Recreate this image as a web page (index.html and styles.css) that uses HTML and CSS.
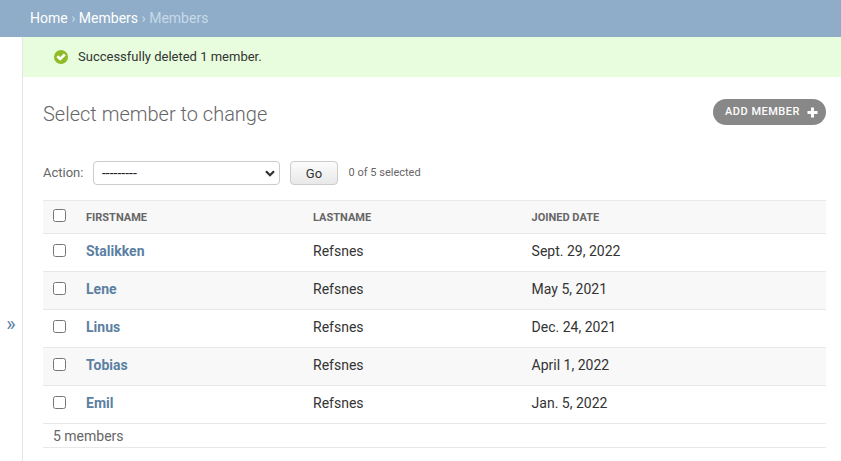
FILE: index.html
```html
<!DOCTYPE html>
<html lang="en">
<head>
<meta charset="utf-8">
<title>Select member to change</title>
<link rel="stylesheet" href="styles.css">
</head>
<body>
<nav class="breadcrumbs"><a>Home</a> › <a>Members</a> › Members</nav>
<div class="main">
<aside class="sidebar-toggle"><span>»</span></aside>
<div class="content-wrap">
<div class="message"><svg class="check" viewBox="0 0 14 14"><circle cx="7" cy="7" r="7" fill="#8fbc26"/><path d="M3.3 6.3 6.2 9 10.8 4.5" fill="none" stroke="#fff" stroke-width="2.6"/></svg>Successfully deleted 1 member.</div>
<main class="content">
<header class="title-row"><h1>Select member to change</h1><a class="add">ADD MEMBER<svg viewBox="0 0 11 11"><path d="M4 .5h3V4h3.5v3H7v3.5H4V7H.5V4H4z" fill="#fff"/></svg></a></header>
<div class="actions"><label for="action">Action:</label><div class="select"><select id="action"><option>---------</option></select><svg viewBox="0 0 10 7"><path d="M1 1.2 5 5.2 9 1.2" fill="none" stroke="#333" stroke-width="2.3"/></svg></div><button>Go</button><span class="counter">0 of 5 selected</span></div>
<table>
<thead><tr><th class="box"><input type="checkbox"></th><th class="first">FIRSTNAME</th><th class="last">LASTNAME</th><th>JOINED DATE</th></tr></thead>
<tbody>
<tr><td><input type="checkbox"></td><td><a>Stalikken</a></td><td>Refsnes</td><td>Sept. 29, 2022</td></tr>
<tr><td><input type="checkbox"></td><td><a>Lene</a></td><td>Refsnes</td><td>May 5, 2021</td></tr>
<tr><td><input type="checkbox"></td><td><a>Linus</a></td><td>Refsnes</td><td>Dec. 24, 2021</td></tr>
<tr><td><input type="checkbox"></td><td><a>Tobias</a></td><td>Refsnes</td><td>April 1, 2022</td></tr>
<tr><td><input type="checkbox"></td><td><a>Emil</a></td><td>Refsnes</td><td>Jan. 5, 2022</td></tr>
</tbody>
</table>
<p class="paginator">5 members</p>
</main>
</div>
</div>
</body>
</html>
```
FILE: styles.css
```css
* { box-sizing: border-box; }
body { margin: 0; height: 461px; overflow: hidden; display: flex; flex-direction: column; background: #fff; color: #333; font: 14px/18px Roboto, sans-serif; }
.breadcrumbs { height: 37px; flex: none; padding: 9px 30px; background: #8fadc8; color: #c8d9e8; }
.breadcrumbs a { color: #fff; }
.main { flex: 1; display: flex; min-height: 0; }
.sidebar-toggle { width: 23px; flex: none; border-right: 1px solid #e6e6e6; color: #5b80a2; font-size: 20px; padding-top: 278px; text-align: center; }
.content-wrap { flex: 1; min-width: 0; }
.message { height: 40px; display: flex; align-items: center; gap: 10px; padding-left: 31px; background: #e7fddd; font-size: 13px; }
.check { width: 14px; height: 14px; }
.content { padding: 22px 15px 0 20px; }
.title-row { display: flex; justify-content: space-between; align-items: flex-start; height: 62px; }
h1 { margin: 3px 0 0; font-size: 20px; font-weight: 300; line-height: 24px; color: #666; }
.add { display: flex; align-items: center; gap: 7px; width: 113px; height: 26px; padding: 0 8px 0 12px; border-radius: 13px; background: #888; color: #fff; font-size: 11px; font-weight: 500; letter-spacing: .5px; white-space: nowrap; }
.add svg { width: 11px; height: 11px; flex: none; }
.actions { display: flex; align-items: center; height: 24px; font-size: 13px; color: #666; }
.actions label { width: 50px; }
.select { display: grid; align-items: center; }
.select > * { grid-area: 1 / 1; }
.select svg { width: 10px; height: 7px; justify-self: end; margin-right: 5px; pointer-events: none; }
select { appearance: none; width: 187px; height: 24px; padding: 0 8px; border: 1px solid #ccc; border-radius: 4px; background: #fff; color: #222; font: 14px Roboto, sans-serif; }
button { width: 48px; height: 24px; margin: 0 10.6px 0 10px; padding: 0; border: 1px solid #ccc; border-radius: 4px; background: linear-gradient(#fcfcfc, #e8e8e8); color: #333; font: 13px Roboto, sans-serif; }
.counter { font-size: 11px; }
table { width: 100%; margin-top: 15px; border-collapse: separate; border-spacing: 0; table-layout: fixed; }
th, td { padding: 0 0 3px; text-align: left; vertical-align: middle; border-bottom: 1px solid #e8e8e8; }
th { height: 34px; padding: 1px 0 0; border-top: 1px solid #e8e8e8; background: #f8f8f8; color: #666; font-size: 11px; font-weight: 700; }
td { height: 38px; }
td:first-child { padding-bottom: 5px; }
th.box { width: 43px; padding: 0 0 3px; }
.first { width: 227px; }
.last { width: 218.6px; }
tbody tr:nth-child(even) { background: #f8f8f8; }
td a { color: #5b80a2; font-weight: 700; }
input { display: block; width: 13px; height: 13px; margin: 0 0 0 10px; }
.paginator { height: 24px; margin: 0; padding: 3px 10px; border-bottom: 1px solid #e8e8e8; color: #666; }
```
